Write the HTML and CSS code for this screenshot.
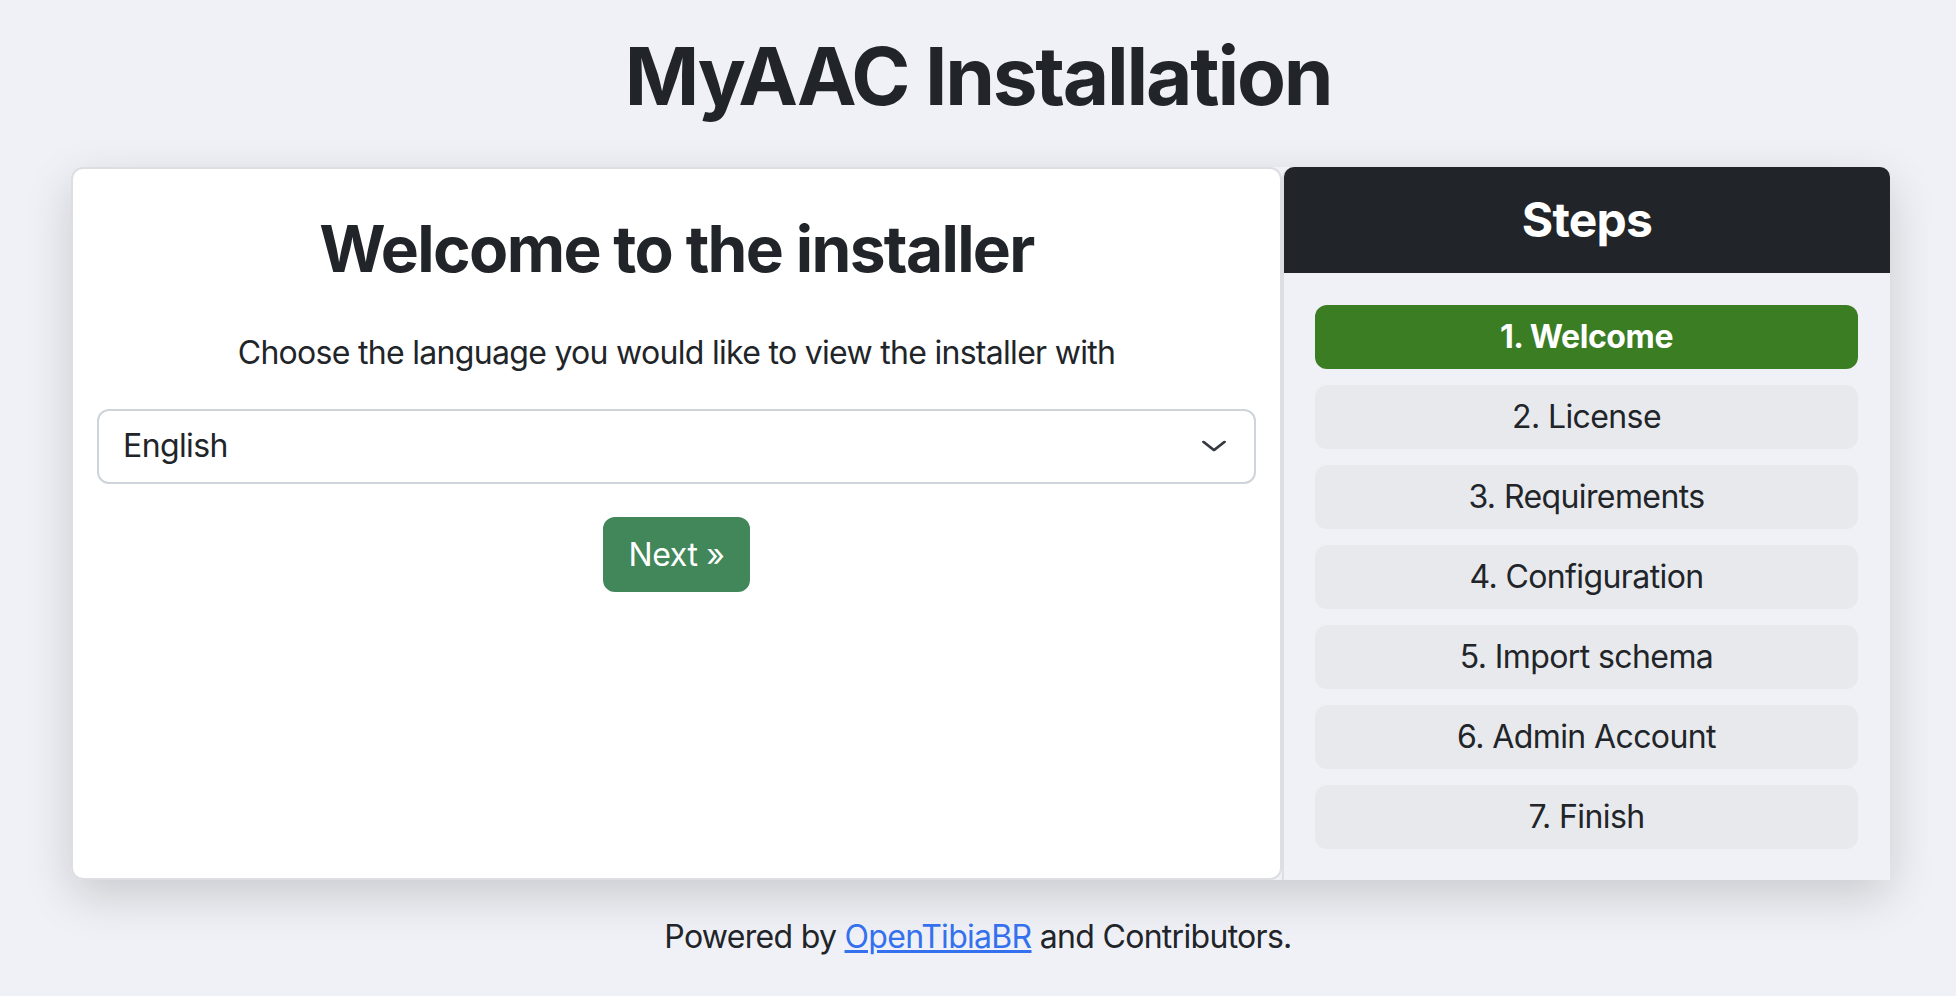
FILE: index.html
```html
<!DOCTYPE html>
<html lang="en">
<head>
<meta charset="utf-8">
<title>MyAAC Installation</title>
<link rel="stylesheet" href="styles.css">
</head>
<body>
<div class="page">
  <h1 class="page-title">MyAAC Installation</h1>
  <div class="installer">
    <div class="main-card">
      <h2 class="welcome">Welcome to the installer</h2>
      <p class="lead">Choose the language you would like to view the installer with</p>
      <div class="select">
        <span class="select-value">English</span>
        <svg class="chevron" viewBox="0 0 16 16" width="28" height="22" preserveAspectRatio="none"><path d="m2 5 6 6 6-6" fill="none" stroke="#343a40" stroke-width="1.7" stroke-linecap="round" stroke-linejoin="round"/></svg>
      </div>
      <div class="actions">
        <button class="btn-next" type="button">Next »</button>
      </div>
    </div>
    <div class="steps">
      <div class="steps-header">Steps</div>
      <ul class="steps-list">
        <li class="step active">1. Welcome</li>
        <li class="step">2. License</li>
        <li class="step">3. Requirements</li>
        <li class="step">4. Configuration</li>
        <li class="step">5. Import schema</li>
        <li class="step">6. Admin Account</li>
        <li class="step">7. Finish</li>
      </ul>
    </div>
  </div>
  <p class="footer">Powered by <a href="#">OpenTibiaBR</a> and Contributors.</p>
</div>
</body>
</html>
```
FILE: styles.css
```css
html, body {
  margin: 0;
  padding: 0;
}
body {
  background: #f0f1f6;
  color: #212529;
  font-family: Inter, "Noto Sans", "Liberation Sans", sans-serif;
  font-size: 32px;
  line-height: 1.5;
}
.page {
  padding-top: 28px;
}
.page-title {
  margin: 0 0 43px;
  text-align: center;
  font-size: 80px;
  line-height: 1.2;
  font-weight: 700;
  letter-spacing: -2.2px;
}
.installer {
  display: grid;
  grid-template-columns: 1211px 608px;
  width: 1819px;
  margin-left: 71px;
  box-shadow: 0 16px 48px rgba(0, 0, 0, 0.16);
  border-radius: 12px;
}
.main-card {
  background: #fff;
  border: 2px solid #dcdee2;
  border-radius: 12px;
  padding: 42px 24px 24px;
  text-align: center;
  min-height: 713px;
  box-sizing: border-box;
}
.welcome {
  margin: 0;
  font-size: 64px;
  line-height: 1.2;
  font-weight: 700;
  letter-spacing: -1.65px;
}
.lead {
  margin: 41px 0 32px;
  font-size: 32px;
  line-height: 1.5;
  letter-spacing: -0.7px;
}
.select {
  display: flex;
  align-items: center;
  justify-content: space-between;
  height: 75px;
  box-sizing: border-box;
  border: 2px solid #ced4da;
  border-radius: 12px;
  padding: 0 26px 0 24px;
  text-align: left;
}
.select-value {
  font-size: 32px;
  letter-spacing: -0.6px;
}
.chevron {
  display: block;
}
.actions {
  margin-top: 33px;
  display: flex;
  justify-content: center;
}
.btn-next {
  background: #41875a;
  color: #fff;
  border: 2px solid #41875a;
  border-radius: 12px;
  height: 75px;
  padding: 0 24px;
  font-family: inherit;
  font-size: 32px;
  letter-spacing: -0.4px;
}
.steps {
  background: #f0f1f6;
  border-left: 2px solid #dcdee2;
  display: flex;
  flex-direction: column;
  border-radius: 12px 12px 0 0;
}
.steps-header {
  background: #212529;
  color: #fff;
  text-align: center;
  font-size: 48px;
  font-weight: 700;
  line-height: 1.2;
  padding: 24px 0;
  border-radius: 10px 10px 0 0;
  letter-spacing: -0.8px;
}
.steps-list {
  list-style: none;
  margin: 0;
  padding: 32px 32px 31px 31px;
  display: flex;
  flex-direction: column;
  gap: 16px;
}
.step {
  background: #e8e9ec;
  border-radius: 12px;
  height: 64px;
  display: flex;
  align-items: center;
  justify-content: center;
  font-size: 32px;
  letter-spacing: -0.6px;
}
.step.active {
  background: #3a7d23;
  color: #fff;
  font-weight: 700;
  letter-spacing: -0.4px;
}
.footer {
  margin: 33px 0 0;
  text-align: center;
  font-size: 32px;
  letter-spacing: -0.7px;
}
.footer a {
  color: #3571ee;
  text-decoration: underline;
}
```
